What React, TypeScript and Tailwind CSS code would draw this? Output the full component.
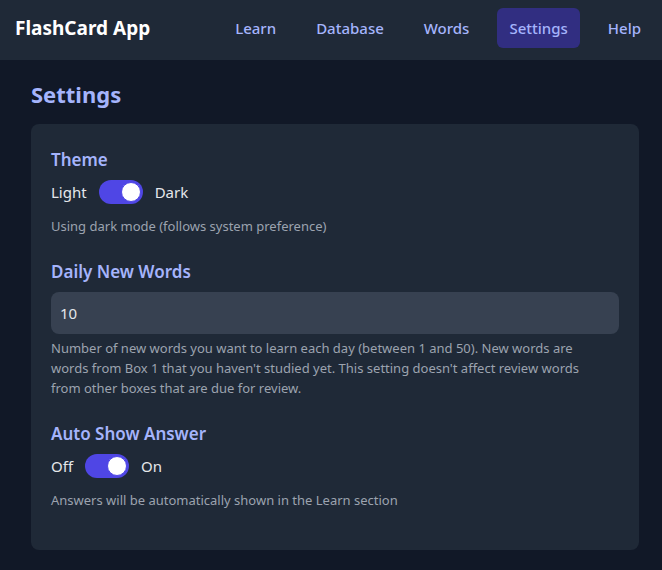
import React from "react";

function Toggle() {
  return (
    <div className="relative h-6 w-11 rounded-full bg-[#4f46e5]">
      <div className="absolute right-[2px] top-[2px] h-5 w-5 rounded-full bg-white border border-[#4f46e5]" />
    </div>
  );
}

export default function App() {
  const nav = ["Learn", "Database", "Words", "Settings", "Help"];
  return (
    <div
      className="min-h-[570px] bg-[#111827]"
      style={{ fontFamily: '"Noto Sans", "Open Sans", sans-serif' }}
    >
      <header className="flex h-[60px] items-center justify-between bg-[#1f2937] pb-1 pl-[15px] pr-[9px]">
        <div className="text-[19px] leading-7 font-bold text-white">FlashCard App</div>
        <nav className="flex gap-4">
          {nav.map((n) => (
            <div
              key={n}
              className={
                "rounded-md px-3 py-2 text-[15px] leading-6 font-medium text-[#a5b4fc] " +
                (n === "Settings" ? "bg-[#312e81]" : "")
              }
            >
              {n}
            </div>
          ))}
        </nav>
      </header>
      <main className="pl-[31px] pr-[23px] pt-[18px] pb-5">
        <h1 className="mb-[14px] text-[22px] leading-8 font-bold text-[#a5b4fc]">Settings</h1>
        <div className="rounded-lg bg-[#1f2937] px-5 pt-[22px] pb-10">
          <section>
            <h2 className="mb-[6px] text-[17px] leading-7 font-semibold text-[#a5b4fc]">Theme</h2>
            <div className="flex items-center gap-3 text-[15px] leading-6 text-[#e5e7eb]">
              <span>Light</span>
              <Toggle />
              <span>Dark</span>
            </div>
            <p className="mt-3 text-[13px] leading-5 text-[#9ca3af]">
              Using dark mode (follows system preference)
            </p>
          </section>
          <section className="mt-[22px]">
            <h2 className="mb-[6px] text-[17px] leading-7 font-semibold text-[#a5b4fc]">Daily New Words</h2>
            <div className="flex h-[42px] items-center rounded-lg bg-[#374151] px-[9px] text-[15px] text-[#e5e7eb]">
              10
            </div>
            <p className="mt-1 text-[13px] leading-5 text-[#9ca3af]">
              Number of new words you want to learn each day (between 1 and 50). New words are
              <br />
              words from Box 1 that you haven't studied yet. This setting doesn't affect review words
              <br />
              from other boxes that are due for review.
            </p>
          </section>
          <section className="mt-[22px]">
            <h2 className="mb-[6px] text-[17px] leading-7 font-semibold text-[#a5b4fc]">Auto Show Answer</h2>
            <div className="flex items-center gap-3 text-[15px] leading-6 text-[#e5e7eb]">
              <span>Off</span>
              <Toggle />
              <span>On</span>
            </div>
            <p className="mt-3 text-[13px] leading-5 text-[#9ca3af]">
              Answers will be automatically shown in the Learn section
            </p>
          </section>
        </div>
      </main>
    </div>
  );
}
